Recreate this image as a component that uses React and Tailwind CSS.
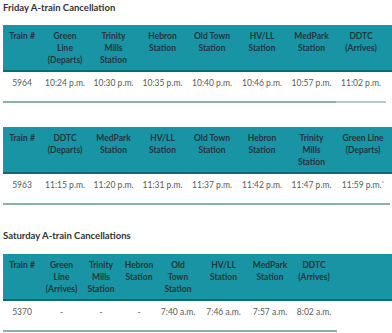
import React from "react";

const font = { fontFamily: "Lato, 'Open Sans', sans-serif" };

function Table({ cols, headers, row, lastLight, width }) {
  return (
    <div className="flex flex-col" style={{ width }}>
      <div className="flex bg-[#1894a4] border-b-2 border-[#0c6c72]">
        {headers.map((h, i) => (
          <div
            key={i}
            className="text-center font-bold text-[#26363b] text-[8.5px] leading-[12px] pt-[5px] pb-[4px] shrink-0"
            style={{ width: cols[i] }}
          >
            {h.map((l, j) => (
              <div key={j} className="whitespace-nowrap">{l}</div>
            ))}
          </div>
        ))}
      </div>
      <div className="flex">
        {row.map((c, i) => (
          <div
            key={i}
            className={
              "text-center text-[#595959] text-[8.5px] leading-[12px] pt-[5px] h-[31px] shrink-0 border-b-2 whitespace-nowrap " +
              (lastLight && i === row.length - 1 ? "border-[#b5cbc4]" : "border-[#8fb0a7]")
            }
            style={{ width: cols[i] }}
          >
            {c}
          </div>
        ))}
      </div>
    </div>
  );
}

export default function App() {
  return (
    <div className="w-[392px] h-[333px] bg-white pl-[3px] overflow-hidden" style={font}>
      <div className="text-[9.5px] font-bold text-[#333333] leading-[16px] h-[25px]">
        Friday A-train Cancellation
      </div>
      <Table
        cols={[38, 48, 49, 49, 50, 50, 49, 50]}
        lastLight
        headers={[
          ["Train #"],
          ["Green", "Line", "(Departs)"],
          ["Trinity", "Mills", "Station"],
          ["Hebron", "Station"],
          ["Old Town", "Station"],
          ["HV/LL", "Station"],
          ["MedPark", "Station"],
          ["DDTC", "(Arrives)"],
        ]}
        row={["5964", "10:24 p.m.", "10:30 p.m.", "10:35 p.m.", "10:40 p.m.", "10:46 p.m.", "10:57 p.m.", "11:02 p.m."]}
      />
      <div className="h-[24px]" />
      <Table
        cols={[38, 48, 49, 49, 50, 50, 49, 54]}
        headers={[
          ["Train #"],
          ["DDTC", "(Departs)"],
          ["MedPark", "Station"],
          ["HV/LL", "Station"],
          ["Old Town", "Station"],
          ["Hebron", "Station"],
          ["Trinity", "Mills", "Station"],
          ["Green Line", "(Departs)"],
        ]}
        row={[
          "5963",
          "11:15 p.m.",
          "11:20 p.m.",
          "11:31 p.m.",
          "11:37 p.m.",
          "11:42 p.m.",
          "11:47 p.m.",
          <span key="s">11:59 p.m.<sup className="text-[6px]">*</sup></span>,
        ]}
      />
      <div className="text-[9.5px] font-bold text-[#333333] leading-[16px] mt-[23px] h-[26px]">
        Saturday A-train Cancellations
      </div>
      <Table
        cols={[38, 41, 38, 38, 40, 51, 42, 46]}
        headers={[
          ["Train #"],
          ["Green", "Line", "(Arrives)"],
          ["Trinity", "Mills", "Station"],
          ["Hebron", "Station"],
          ["Old", "Town", "Station"],
          ["HV/LL", "Station"],
          ["MedPark", "Station"],
          ["DDTC", "(Arrives)"],
        ]}
        row={["5370", "-", "-", "-", "7:40 a.m.", "7:46 a.m.", "7:57 a.m.", "8:02 a.m."]}
      />
    </div>
  );
}
